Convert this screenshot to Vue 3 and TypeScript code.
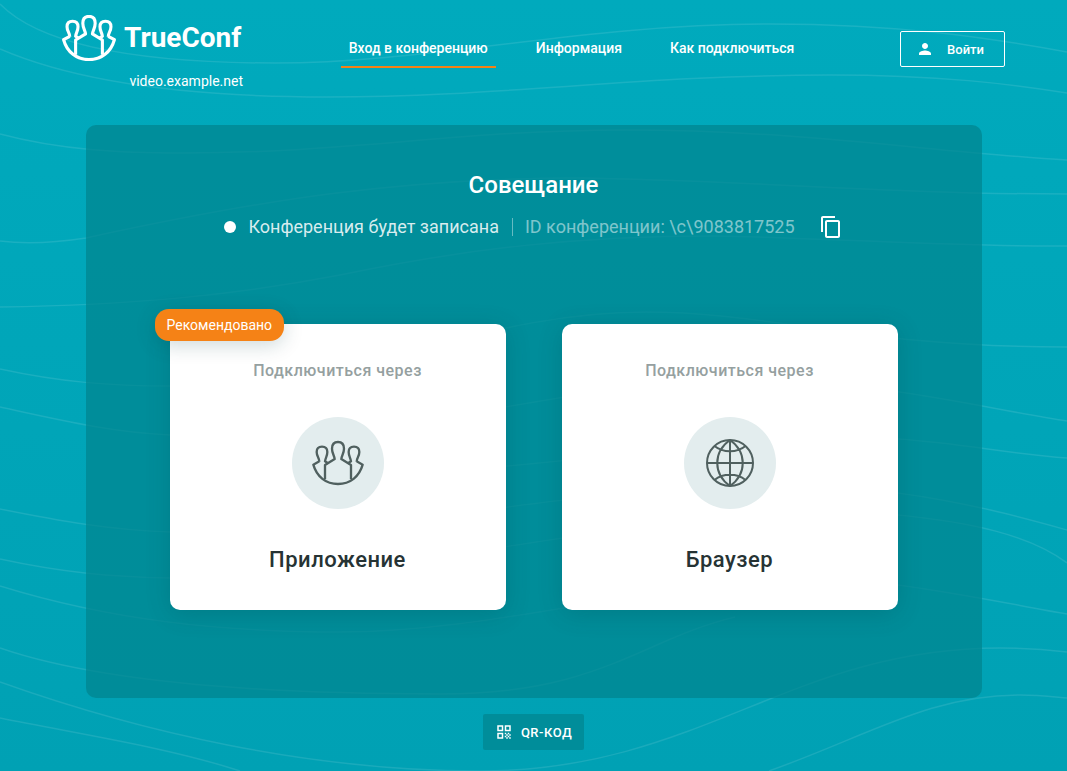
<script setup lang="ts">
import { ref } from 'vue'

interface NavItem {
  id: string
  label: string
}

const host = 'video.example.net'
const navItems: NavItem[] = [
  { id: 'join', label: 'Вход в конференцию' },
  { id: 'info', label: 'Информация' },
  { id: 'help', label: 'Как подключиться' },
]
const active = ref('join')

const conferenceId = '\\c\\9083817525'

function copyId(): void {
  navigator.clipboard?.writeText(conferenceId)
}

const people: string[] = [
  'M39 116V73L68 55C67 45 60 38 60 24C60 11 67 4 78 4S96 11 96 24C96 38 89 45 88 55L117 73V116',
  'M22 63C22 52 14 47 14 34C14 23 20 18 30 18S46 23 46 34C46 47 40 52 39 62L48 68',
  'M134 63C134 52 142 47 142 34C142 23 136 18 126 18S110 23 110 34C110 47 116 52 117 62L108 68',
  'M22 62L4 72C14 108 42 130 78 130S142 108 152 72L134 62',
]

const waves: string[] = [
  'M0 4C45 50 160 63 275 63C430 63 580 24 770 24C900 24 990 38 1067 52',
  'M0 49C90 88 220 97 327 97C500 97 640 75 830 75C940 75 1010 84 1067 93',
  'M0 134C60 150 120 153 184 153C350 153 460 130 626 130C800 130 930 152 1067 160',
  'M0 241C30 245 60 242 86 238C260 200 400 178 578 178C740 180 890 194 1067 194',
  'M0 307C130 305 230 296 340 275C470 248 580 236 714 236C840 238 950 247 1067 246',
  'M0 369C60 382 110 386 170 386C360 386 480 312 646 312C770 312 860 347 1067 347',
  'M0 407C60 420 110 432 170 435C390 450 560 380 740 380C880 380 980 408 1067 421',
  'M170 470C420 500 680 430 898 439C960 443 1010 454 1067 458',
  'M0 509C60 521 110 530 170 532C430 540 650 460 898 493C970 503 1020 517 1067 530',
  'M0 559C60 572 110 577 170 578C440 580 640 500 898 515C970 522 1030 535 1067 563',
  'M0 586C110 620 220 632 340 632C530 632 700 560 898 585C970 595 1020 606 1067 614',
  'M0 648C110 686 290 694 440 694C600 694 640 640 735 617',
  'M0 682C140 732 310 771 480 771C700 771 790 648 1000 648C1030 648 1050 650 1067 652',
  'M0 718C90 736 170 748 240 771',
  'M769 771C870 735 930 695 1020 695C1040 695 1055 697 1067 698',
]
</script>

<template>
  <div class="page">
    <svg class="waves" viewBox="0 0 1067 771" preserveAspectRatio="none" aria-hidden="true">
      <path v-for="d in waves" :key="d" :d="d" />
    </svg>

    <header class="header">
      <a class="brand" href="#">
        <span class="logo">
          <svg class="mark" viewBox="0 0 156 134" aria-hidden="true">
            <path v-for="d in people" :key="d" :d="d" />
          </svg>
          <span class="wordmark">TrueConf</span>
        </span>
        <span class="host">{{ host }}</span>
      </a>

      <nav class="nav">
        <a
          v-for="item in navItems"
          :key="item.id"
          :href="'#' + item.id"
          class="nav-link"
          :class="{ active: active === item.id }"
          @click="active = item.id"
        >{{ item.label }}</a>
      </nav>

      <button class="login" type="button">
        <svg class="small-icon" viewBox="0 0 24 24" aria-hidden="true">
          <path d="M12 12c2.200 0 4-1.800 4-4s-1.800-4-4-4-4 1.800-4 4 1.800 4 4 4zm0 2c-2.700 0-8 1.300-8 4v2h16v-2c0-2.700-5.300-4-8-4z" />
        </svg>
        Войти
      </button>
    </header>

    <main class="main">
      <section class="panel">
        <h1 class="title">Совещание</h1>
        <div class="meta">
          <span class="dot"></span>
          <span class="record">Конференция будет записана</span>
          <span class="conf-id">ID конференции: {{ conferenceId }}</span>
          <button class="copy" type="button" aria-label="Скопировать ID" @click="copyId">
            <svg viewBox="0 0 24 24" aria-hidden="true">
              <path d="M16 1H4c-1.100 0-2 .900-2 2v14h2V3h12V1zm3 4H8c-1.100 0-2 .900-2 2v14c0 1.100.900 2 2 2h11c1.100 0 2-.900 2-2V7c0-1.100-.900-2-2-2zm0 16H8V7h11v14z" />
            </svg>
          </button>
        </div>

        <div class="cards">
          <a class="card" href="#app-client">
            <span class="badge">Рекомендовано</span>
            <span class="via">Подключиться через</span>
            <span class="circle">
              <svg class="mark" viewBox="0 0 156 134" aria-hidden="true">
                <path v-for="d in people" :key="d" :d="d" />
              </svg>
            </span>
            <span class="name">Приложение</span>
          </a>

          <a class="card" href="#browser">
            <span class="via">Подключиться через</span>
            <span class="circle">
              <svg class="globe" viewBox="0 0 48 48" aria-hidden="true">
                <circle cx="24" cy="24" r="23" />
                <path d="M24 1V47M1 24H47M24 1C7 13 7 35 24 47M24 1C41 13 41 35 24 47M8.500 7C17 14 31 14 39.500 7M8.500 41C17 34 31 34 39.500 41" />
              </svg>
            </span>
            <span class="name">Браузер</span>
          </a>
        </div>
      </section>

      <button class="qr" type="button">
        <svg class="small-icon" viewBox="0 0 24 24" aria-hidden="true">
          <path d="M3 11h8V3H3v8zm2-6h4v4H5V5zM3 21h8v-8H3v8zm2-6h4v4H5v-4zM13 3v8h8V3h-8zm6 6h-4V5h4v4zM19 19h2v2h-2zM13 13h2v2h-2zM15 15h2v2h-2zM13 17h2v2h-2zM15 19h2v2h-2zM17 17h2v2h-2zM17 13h2v2h-2zM19 15h2v2h-2z" />
        </svg>
        QR-КОД
      </button>
    </main>
  </div>
</template>

<style>
body {
  margin: 0;
}
</style>

<style scoped>
.page {
  position: relative;
  box-sizing: border-box;
  min-height: 100vh;
  padding-bottom: 21px;
  background: linear-gradient(#00aabd, #00a1b4);
  color: #fff;
  font-family: Roboto, "Noto Sans", sans-serif;
}

.waves {
  position: absolute;
  inset: 0;
  width: 100%;
  height: 100%;
  fill: none;
  stroke: rgba(255, 255, 255, 0.1);
  stroke-width: 1.5;
}

.header {
  position: relative;
  display: flex;
  justify-content: space-between;
  align-items: flex-start;
  box-sizing: border-box;
  height: 125px;
  padding: 14px 62px 0;
}

a {
  color: inherit;
  text-decoration: none;
}

button {
  font-family: inherit;
  color: inherit;
  cursor: pointer;
}

.brand {
  display: flex;
  flex-direction: column;
  align-items: flex-end;
}

.logo {
  display: flex;
  align-items: center;
  gap: 8px;
  width: 181px;
  height: 47px;
}

.mark {
  flex: none;
  width: 54px;
  height: 46px;
  fill: none;
  stroke: currentColor;
  stroke-width: 9;
  stroke-linejoin: round;
}

.wordmark {
  font-size: 28px;
  font-weight: 700;
  line-height: 46px;
}

.host {
  margin-top: 10px;
  font-size: 14px;
  line-height: 20px;
}

.nav {
  display: flex;
  gap: 32px;
  padding-top: 14px;
}

.nav-link {
  padding: 10px 8px 8px;
  border-bottom: 2px solid transparent;
  font-size: 14px;
  font-weight: 500;
  line-height: 20px;
}

.nav-link.active {
  border-color: #f58216;
}

.login,
.qr {
  display: flex;
  align-items: center;
  box-sizing: border-box;
  height: 36px;
  border-radius: 2px;
  font-size: 13px;
  font-weight: 500;
}

.login {
  gap: 13px;
  margin-top: 17px;
  padding: 0 20px 0 15px;
  border: 1px solid #fff;
  background: transparent;
}

.small-icon {
  width: 18px;
  height: 18px;
  fill: currentColor;
}

.main {
  position: relative;
  display: flex;
  flex-direction: column;
  align-items: center;
  gap: 16px;
}

.panel {
  box-sizing: border-box;
  width: 84%;
  max-width: 896px;
  padding: 44px 84px 88px;
  border-radius: 10px;
  background: rgba(0, 131, 141, 0.7);
}

.title {
  margin: 0;
  font-size: 24px;
  font-weight: 500;
  line-height: 32px;
  text-align: center;
}

.meta {
  display: flex;
  align-items: center;
  justify-content: center;
  height: 52px;
  font-size: 18px;
  line-height: 24px;
}

.dot {
  width: 12px;
  height: 12px;
  margin-right: 12px;
  border-radius: 50%;
  background: #fff;
}

.record {
  color: rgba(255, 255, 255, 0.85);
}

.conf-id {
  display: flex;
  align-items: center;
  color: rgba(255, 255, 255, 0.5);
}

.conf-id::before {
  content: "";
  width: 1px;
  height: 18px;
  margin: 0 12px 0 13px;
  background: rgba(255, 255, 255, 0.4);
}

.copy {
  display: flex;
  margin-left: 24px;
  padding: 0;
  border: 0;
  background: none;
}

.copy svg {
  width: 24px;
  height: 24px;
  fill: currentColor;
}

.cards {
  display: grid;
  grid-template-columns: 1fr 1fr;
  gap: 56px;
  margin-top: 71px;
}

.card {
  position: relative;
  display: flex;
  flex-direction: column;
  align-items: center;
  padding: 35px 0 34px;
  border-radius: 10px;
  background: #fff;
  box-shadow: 0 4px 24px rgba(0, 60, 66, 0.2);
}

.badge {
  position: absolute;
  top: -15px;
  left: -15px;
  padding: 0 12px;
  border-radius: 14px;
  background: #f58216;
  box-shadow: 0 4px 20px rgba(0, 60, 66, 0.2);
  color: #fff;
  font-size: 14px;
  line-height: 32px;
}

.via {
  color: #95a0a0;
  font-size: 16px;
  font-weight: 500;
  line-height: 24px;
  letter-spacing: 0.5px;
}

.circle {
  display: flex;
  align-items: center;
  justify-content: center;
  width: 92px;
  height: 92px;
  margin: 34px 0;
  border-radius: 50%;
  background: #e3edee;
  color: #50605f;
}

.circle .mark {
  width: 52px;
  stroke-width: 7;
}

.globe {
  width: 48px;
  height: 48px;
  fill: none;
  stroke: currentColor;
  stroke-width: 2;
}

.name {
  color: #263334;
  font-size: 22px;
  font-weight: 500;
  line-height: 33px;
  letter-spacing: 0.5px;
}

.qr {
  gap: 8px;
  padding: 0 12px;
  border: 0;
  background: #008d9a;
  letter-spacing: 0.5px;
}
</style>
